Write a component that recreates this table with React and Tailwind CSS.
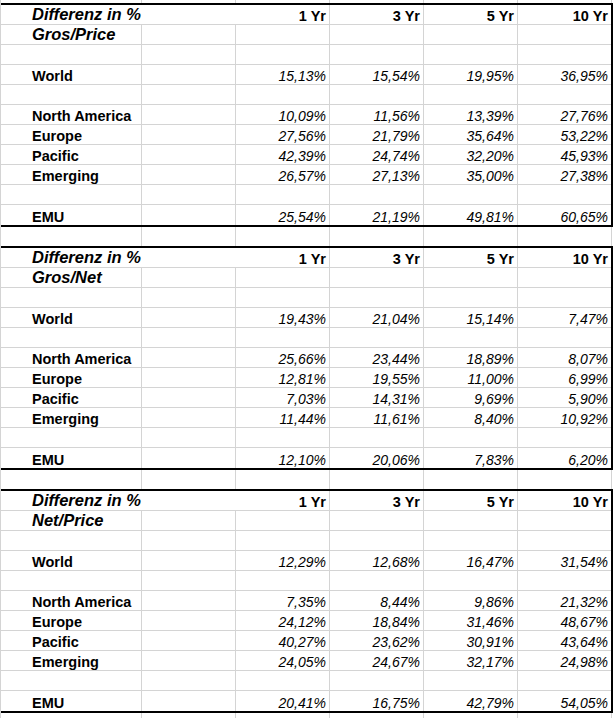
const tables = [
  {
    sub: 'Gros/Price',
    rows: {
      World: ['15,13%', '15,54%', '19,95%', '36,95%'],
      'North America': ['10,09%', '11,56%', '13,39%', '27,76%'],
      Europe: ['27,56%', '21,79%', '35,64%', '53,22%'],
      Pacific: ['42,39%', '24,74%', '32,20%', '45,93%'],
      Emerging: ['26,57%', '27,13%', '35,00%', '27,38%'],
      EMU: ['25,54%', '21,19%', '49,81%', '60,65%'],
    },
  },
  {
    sub: 'Gros/Net',
    rows: {
      World: ['19,43%', '21,04%', '15,14%', '7,47%'],
      'North America': ['25,66%', '23,44%', '18,89%', '8,07%'],
      Europe: ['12,81%', '19,55%', '11,00%', '6,99%'],
      Pacific: ['7,03%', '14,31%', '9,69%', '5,90%'],
      Emerging: ['11,44%', '11,61%', '8,40%', '10,92%'],
      EMU: ['12,10%', '20,06%', '7,83%', '6,20%'],
    },
  },
  {
    sub: 'Net/Price',
    rows: {
      World: ['12,29%', '12,68%', '16,47%', '31,54%'],
      'North America': ['7,35%', '8,44%', '9,86%', '21,32%'],
      Europe: ['24,12%', '18,84%', '31,46%', '48,67%'],
      Pacific: ['40,27%', '23,62%', '30,91%', '43,64%'],
      Emerging: ['24,05%', '24,67%', '32,17%', '24,98%'],
      EMU: ['20,41%', '16,75%', '42,79%', '54,05%'],
    },
  },
]

const layout = [
  'head',
  'sub',
  null,
  'World',
  null,
  'North America',
  'Europe',
  'Pacific',
  'Emerging',
  null,
  'EMU',
]

const grid = 'border-[#d4d4d4]'

// empty sheet strip (only gridlines), used above, between and below the tables
function Strip({ h }) {
  return (
    <div className={`flex ${h}`}>
      <div className={`w-[141px] border-r ${grid}`} />
      <div className={`w-[94px] border-r ${grid}`} />
      <div className={`w-[94px] border-r ${grid}`} />
      <div className={`w-[94px] border-r ${grid}`} />
      <div className={`w-[94px] border-r ${grid}`} />
      <div className={`w-[94px] border-r ${grid}`} />
    </div>
  )
}

function Num({ children, last, bold }) {
  return (
    <div
      className={`flex items-end justify-end pr-[3px] leading-[16px] ${
        bold ? 'text-[14.5px] font-bold' : 'text-[14px] italic'
      } ${last ? 'w-[93px]' : `w-[94px] border-r ${grid}`}`}
    >
      {children}
    </div>
  )
}

function Table({ t }) {
  return (
    <div className="w-[612px] border-y-2 border-r-2 border-black">
      {layout.map((key, i) => {
        const line = i < layout.length - 1 ? `border-b ${grid}` : ''
        if (key === 'head') {
          return (
            <div key={i} className={`flex h-[20px] ${line}`}>
              <div className="flex w-[235px] items-end pb-[1px] pl-[31px] text-[16.5px] leading-[18px] font-bold italic whitespace-nowrap">
                Differenz in %
              </div>
              <Num bold>1 Yr</Num>
              <Num bold>3 Yr</Num>
              <Num bold>5 Yr</Num>
              <Num bold last>10 Yr</Num>
            </div>
          )
        }
        const vals = key && key !== 'sub' ? t.rows[key] : ['', '', '', '']
        return (
          <div key={i} className={`flex h-[20px] ${line}`}>
            <div
              className={`flex w-[141px] items-end border-r ${grid} pl-[31px] whitespace-nowrap ${
                key === 'sub'
                  ? 'pb-[1px] text-[16.5px] leading-[18px] font-bold italic'
                  : 'text-[14.5px] leading-[16px] font-bold'
              }`}
            >
              {key === 'sub' ? t.sub : key}
            </div>
            <div className={`w-[94px] border-r ${grid}`} />
            <Num>{vals[0]}</Num>
            <Num>{vals[1]}</Num>
            <Num>{vals[2]}</Num>
            <Num last>{vals[3]}</Num>
          </div>
        )
      })}
    </div>
  )
}

export default function App() {
  return (
    <div className="h-[718px] w-[614px] overflow-hidden bg-white font-['Liberation_Sans',Arial,sans-serif] text-black">
      <div className={`h-full border-l ${grid}`}>
        <Strip h="h-[3px]" />
        <Table t={tables[0]} />
        <Strip h="h-[19px]" />
        <Table t={tables[1]} />
        <Strip h="h-[19px]" />
        <Table t={tables[2]} />
        <Strip h="h-[10px]" />
      </div>
    </div>
  )
}
